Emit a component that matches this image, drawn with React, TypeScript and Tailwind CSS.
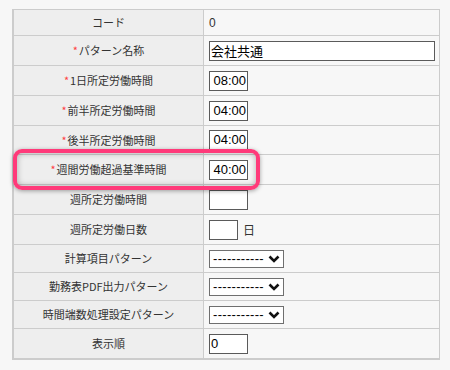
import React from "react";

type Row = {
  label: string;
  req?: boolean;
  h: string;
  kind: "text" | "wide" | "time" | "empty" | "days" | "select" | "order";
  value?: string;
};

const rows: Row[] = [
  { label: "コード", h: "h-[26px]", kind: "text", value: "0" },
  { label: "パターン名称", req: true, h: "h-[30px]", kind: "wide", value: "会社共通" },
  { label: "1日所定労働時間", req: true, h: "h-[30px]", kind: "time", value: "08:00" },
  { label: "前半所定労働時間", req: true, h: "h-[30px]", kind: "time", value: "04:00" },
  { label: "後半所定労働時間", req: true, h: "h-[29px]", kind: "time", value: "04:00" },
  { label: "週間労働超過基準時間", req: true, h: "h-[30px]", kind: "time", value: "40:00" },
  { label: "週所定労働時間", h: "h-[30px]", kind: "empty" },
  { label: "週所定労働日数", h: "h-[30px]", kind: "days" },
  { label: "計算項目パターン", h: "h-[28px]", kind: "select" },
  { label: "勤務表PDF出力パターン", h: "h-[28px]", kind: "select" },
  { label: "時間端数処理設定パターン", h: "h-[28px]", kind: "select" },
  { label: "表示順", h: "h-[29px]", kind: "order", value: "0" },
];

const fontJP = "font-['Noto_Sans_CJK_JP','Noto_Sans',sans-serif]";
const fontIn = "font-['Liberation_Sans','Noto_Sans_CJK_JP',sans-serif]";

function Select() {
  return (
    <div
      className={`w-[75px] h-[18px] bg-white border border-[#6f6f6f] flex items-center justify-between pl-[3px] pr-[3px] ${fontIn}`}
    >
      <span className="text-[13px] leading-none text-black tracking-[0.3px]">-----------</span>
      <svg width="12" height="8" viewBox="0 0 12 8">
        <path d="M1.5 1.5 L6 6 L10.5 1.5" fill="none" stroke="#111" strokeWidth="2.6" />
      </svg>
    </div>
  );
}

function Value({ r }: { r: Row }) {
  switch (r.kind) {
    case "text":
      return <span className={`text-[12px] text-[#333] ${fontIn}`}>{r.value}</span>;
    case "wide":
      return (
        <div
          className={`w-[226px] h-[20px] bg-white border border-[#5a5a5a] flex items-center pl-[1px] text-[13px] text-black ${fontJP}`}
        >
          {r.value}
        </div>
      );
    case "time":
      return (
        <div
          className={`w-[39px] h-[20px] bg-white border border-[#5a5a5a] flex items-center justify-end pr-[1px] text-[13px] text-black ${fontIn}`}
        >
          {r.value}
        </div>
      );
    case "empty":
      return <div className="w-[39px] h-[20px] bg-white border border-[#5a5a5a]" />;
    case "days":
      return (
        <div className="flex items-center gap-[5px]">
          <div className="w-[29px] h-[20px] bg-white border border-[#5a5a5a]" />
          <span className={`text-[12px] text-[#333] ${fontJP}`}>日</span>
        </div>
      );
    case "select":
      return <Select />;
    case "order":
      return (
        <div
          className={`w-[39px] h-[20px] bg-white border border-[#5a5a5a] flex items-center pl-[1px] text-[13px] text-black ${fontIn}`}
        >
          {r.value}
        </div>
      );
  }
}

export default function App() {
  return (
    <div className="w-[450px] h-[370px] bg-[#f7f7f7] pt-[9px] pl-[12px]">
      <div className="relative w-[428px] border-l-2 border-t border-r border-b-2 border-[#cccccc]">
        {rows.map((r, i) => (
          <div
            key={i}
            className={`flex ${r.h} ${i < rows.length - 1 ? "border-b border-[#cccccc]" : ""}`}
          >
            <div
              className={`w-[190px] shrink-0 bg-[#eeeeee] border-r border-[#cccccc] flex items-center justify-center text-[11px] text-[#333] ${fontJP}`}
            >
              {r.req && <span className="text-[#ff4040] mr-[1px]">*</span>}
              {r.label}
            </div>
            <div className="flex-1 bg-[#f7f7f7] flex items-center pl-[5px]">
              <Value r={r} />
            </div>
          </div>
        ))}
        <div className="absolute left-[-1px] top-[139px] w-[247px] h-[41px] rounded-[9px] border-[4px] border-[#ff3a7a] shadow-[inset_0_0_6px_rgba(0,0,0,0.3),0_1px_4px_rgba(0,0,0,0.35)] pointer-events-none" />
      </div>
    </div>
  );
}
